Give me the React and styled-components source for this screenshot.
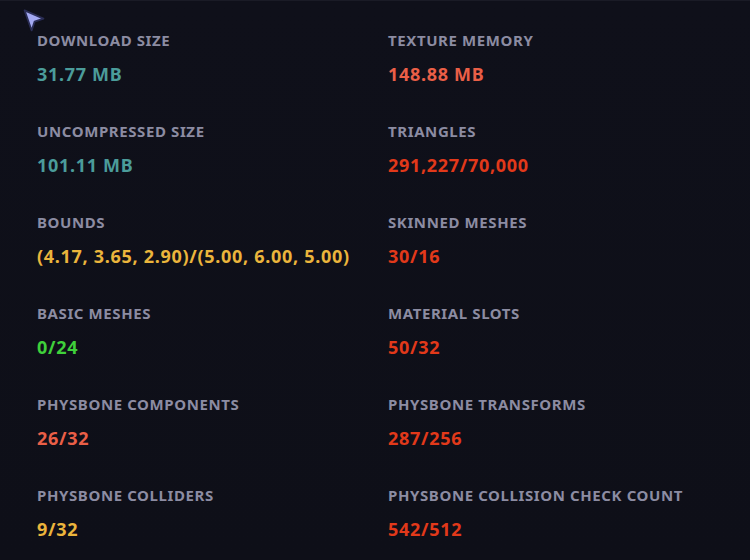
import React from 'react';
import styled, { createGlobalStyle } from 'styled-components';

const Global = createGlobalStyle`
  html, body { margin: 0; padding: 0; background: #0e0f19; }
  body { font-family: "Noto Sans", "Open Sans", sans-serif; }
`

const Page = styled.div`
  position: relative;
  width: 750px;
  height: 560px;
  overflow: hidden;
  background: linear-gradient(180deg, #0f101a 0%, #0e0f18 100%);
  border-top: 1px solid #1a1b26;
  box-sizing: border-box;
`
const Grid = styled.div`
  display: grid;
  grid-template-columns: 351px 1fr;
  grid-auto-rows: 91px;
  padding: 28px 0 0 37px;
`
const Stat = styled.div`
  display: flex;
  flex-direction: column;
  gap: 11px;
`
const Label = styled.div`
  font-size: 15px;
  line-height: 22px;
  font-weight: 700;
  letter-spacing: 0.6px;
  color: #8c8ca2;
  text-transform: uppercase;
`
const Value = styled.div`
  font-size: 18px;
  line-height: 24px;
  font-weight: 700;
  letter-spacing: 0.7px;
  color: ${p => p.color};
`
const Cursor = styled.svg`
  position: absolute;
  left: 21px;
  top: 7px;
`

const colors = {
  teal: '#4b9c9a',
  salmon: '#ea5f47',
  red: '#e2391a',
  yellow: '#ebb53c',
  green: '#3fd13b',
}

const stats = [
  ['Download Size', '31.77 MB', 'teal'],
  ['Texture Memory', '148.88 MB', 'salmon'],
  ['Uncompressed Size', '101.11 MB', 'teal'],
  ['Triangles', '291,227/70,000', 'red'],
  ['Bounds', '(4.17, 3.65, 2.90)/(5.00, 6.00, 5.00)', 'yellow'],
  ['Skinned Meshes', '30/16', 'red'],
  ['Basic Meshes', '0/24', 'green'],
  ['Material Slots', '50/32', 'red'],
  ['PhysBone Components', '26/32', 'salmon'],
  ['PhysBone Transforms', '287/256', 'red'],
  ['PhysBone Colliders', '9/32', 'yellow'],
  ['PhysBone Collision Check Count', '542/512', 'red'],
]

export default function App() {
  return (
    <Page>
      <Global />
      <Grid>
        {stats.map(([label, value, c]) => (
          <Stat key={label}>
            <Label>{label}</Label>
            <Value color={colors[c]}>{value}</Value>
          </Stat>
        ))}
      </Grid>
      <Cursor width="26" height="26" viewBox="0 0 22 22">
        <path d="M3 2 L19 9 L11.5 11.5 L9 19 Z" fill="#a3a9f2" stroke="#2a2d55" strokeWidth="1.5" strokeLinejoin="round" />
      </Cursor>
    </Page>
  )
}
